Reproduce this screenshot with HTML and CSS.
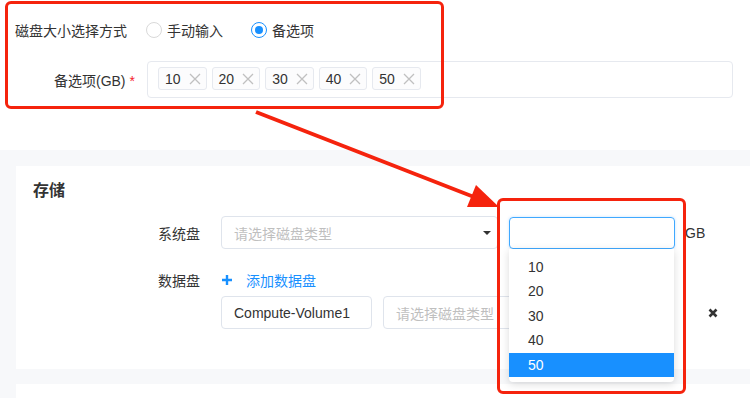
FILE: index.html
```html
<!DOCTYPE html>
<html lang="zh-CN">
<head>
    <meta charset="UTF-8">
    <meta name="viewport" content="width=device-width, initial-scale=1.0">
    <title>磁盘配置</title>
    <link rel="stylesheet" href="styles.css">
</head>
<body>
    <!-- Disk size mode -->
    <section class="size-config">
        <div class="form-row">
            <label class="form-label">磁盘大小选择方式</label>
            <div class="radio-group">
                <label class="radio"><span class="radio-dot"></span>手动输入</label>
                <label class="radio checked"><span class="radio-dot"></span>备选项</label>
            </div>
        </div>
        <div class="form-row options-row">
            <label class="form-label is-required">备选项(GB)<span class="required">*</span></label>
            <div class="tag-box">
                <span class="tag">10<svg class="tag-close" viewBox="0 0 12 12"><path d="M1 1L11 11M11 1L1 11"/></svg></span>
                <span class="tag">20<svg class="tag-close" viewBox="0 0 12 12"><path d="M1 1L11 11M11 1L1 11"/></svg></span>
                <span class="tag">30<svg class="tag-close" viewBox="0 0 12 12"><path d="M1 1L11 11M11 1L1 11"/></svg></span>
                <span class="tag">40<svg class="tag-close" viewBox="0 0 12 12"><path d="M1 1L11 11M11 1L1 11"/></svg></span>
                <span class="tag">50<svg class="tag-close" viewBox="0 0 12 12"><path d="M1 1L11 11M11 1L1 11"/></svg></span>
            </div>
        </div>
    </section>

    <!-- Storage card -->
    <main class="content">
        <section class="card">
            <h2 class="card-title">存储</h2>
            <div class="disk-row">
                <span class="disk-label">系统盘</span>
                <div class="select wide">
                    <span class="placeholder">请选择磁盘类型</span>
                    <span class="caret"></span>
                </div>
                <div class="size-field">
                    <div class="size-input"></div>
                    <ul class="dropdown">
                        <li>10</li>
                        <li>20</li>
                        <li>30</li>
                        <li>40</li>
                        <li class="active">50</li>
                    </ul>
                </div>
                <span class="unit">GB</span>
            </div>
            <div class="disk-row data-row">
                <span class="disk-label">数据盘</span>
                <a class="add-link" href="#">
                    <svg class="plus" viewBox="0 0 10 10"><path d="M5 0V10M0 5H10"/></svg>
                    添加数据盘
                </a>
            </div>
            <div class="volume-row">
                <div class="text-input">Compute-Volume1</div>
                <div class="select volume-select">
                    <span class="placeholder">请选择磁盘类型</span>
                </div>
                <svg class="remove" viewBox="0 0 10 10"><path d="M1.5 1.5L8.5 8.5M8.5 1.5L1.5 8.5"/></svg>
            </div>
        </section>
        <section class="card next-card"></section>
    </main>

    <!-- Annotations -->
    <div class="mark mark-top"></div>
    <div class="mark mark-dropdown"></div>
    <svg class="arrow" viewBox="0 0 750 398">
        <line x1="256" y1="112" x2="474" y2="197"/>
        <polygon points="499,207 467,207 476,185"/>
    </svg>
</body>
</html>
```

FILE: styles.css
```css
* {
    margin: 0;
    padding: 0;
    box-sizing: border-box;
}

body {
    width: 750px;
    height: 398px;
    overflow: hidden;
    position: relative;
    background-color: #fff;
    color: #333;
    font-family: "Liberation Sans", "Noto Sans CJK SC", sans-serif;
    font-size: 14px;
}

/* Disk size mode */
.size-config {
    height: 150px;
    padding-top: 14px;
}

.form-row {
    display: flex;
    align-items: center;
    height: 32px;
}

.form-label {
    width: 146px;
    padding-right: 19px;
    text-align: right;
    flex-shrink: 0;
}

.form-label.is-required {
    padding-right: 11px;
}

.required {
    color: #f5222d;
    margin-left: 4px;
}

.radio-group {
    display: flex;
}

.radio {
    display: flex;
    align-items: center;
    gap: 5px;
    margin-right: 28px;
}

.radio-dot {
    width: 16px;
    height: 16px;
    border: 1px solid #d9d9d9;
    border-radius: 50%;
    display: flex;
    align-items: center;
    justify-content: center;
}

.radio.checked .radio-dot {
    border-color: #1890ff;
}

.radio.checked .radio-dot::after {
    content: "";
    width: 8px;
    height: 8px;
    border-radius: 50%;
    background-color: #1890ff;
}

.options-row {
    height: 37px;
    margin-top: 15px;
}

.tag-box {
    width: 586px;
    height: 37px;
    margin-left: 1px;
    padding: 5px 10px;
    border: 1px solid #e6e9ef;
    border-radius: 4px;
    display: flex;
    gap: 5px;
}

.tag {
    height: 23px;
    padding: 0 5px 0 6px;
    border: 1px solid #e6e9ef;
    border-radius: 3px;
    background-color: #fcfcfd;
    display: flex;
    align-items: center;
    gap: 8px;
}

.tag-close {
    width: 12px;
    height: 12px;
    fill: none;
    stroke: #c0c0c0;
    stroke-width: 1.3;
}

/* Storage card */
.content {
    background-color: #f7f8fa;
    padding: 16px 0 0 16px;
    height: 248px;
}

.card {
    background-color: #fff;
    height: 203px;
    padding: 13px 0 0 17px;
}

.card.next-card {
    margin-top: 15px;
    height: 14px;
    padding: 0;
}

.card-title {
    font-size: 16px;
    font-weight: 600;
    line-height: 24px;
}

.disk-row {
    display: flex;
    align-items: center;
    margin-top: 13px;
}

.disk-label {
    width: 167px;
    margin-right: 21px;
    text-align: right;
}

.select,
.text-input,
.size-input {
    height: 33px;
    border: 1px solid #dfe4ec;
    border-radius: 4px;
    display: flex;
    align-items: center;
    padding: 0 12px;
}

.select.wide {
    width: 277px;
    justify-content: space-between;
    padding-right: 6px;
}

.placeholder {
    color: #bfbfbf;
}

.caret {
    width: 0;
    height: 0;
    border-left: 4px solid transparent;
    border-right: 4px solid transparent;
    border-top: 4px solid #333;
}

.size-field {
    position: relative;
    margin-left: 11px;
}

.size-input {
    width: 166px;
    height: 32px;
    border-color: #40a9ff;
    box-shadow: 0 0 3px rgba(24, 144, 255, 0.25);
}

.dropdown {
    position: absolute;
    top: 32px;
    left: 0;
    width: 165px;
    height: 133px;
    padding-top: 6px;
    list-style: none;
    background-color: #fff;
    border-radius: 0 0 4px 4px;
    box-shadow: 0 2px 8px rgba(0, 0, 0, 0.15);
    z-index: 5;
}

.dropdown li {
    height: 24.5px;
    line-height: 24.5px;
    padding-left: 19px;
}

.dropdown li.active {
    background-color: #1890ff;
    color: #fff;
}

.unit {
    margin-left: 10px;
}

.data-row {
    height: 22px;
    margin-top: 20px;
}

.add-link {
    display: flex;
    align-items: center;
    color: #1890ff;
    text-decoration: none;
    margin-left: 1px;
}

.plus {
    width: 10px;
    height: 10px;
    margin-right: 14px;
    fill: none;
    stroke: #1890ff;
    stroke-width: 2.4;
}

.volume-row {
    display: flex;
    align-items: center;
    margin: 5px 0 0 188px;
}

.text-input {
    width: 151px;
}

.volume-select {
    width: 280px;
    margin-left: 11px;
}

.remove {
    width: 10px;
    height: 10px;
    margin-left: 45px;
    fill: none;
    stroke: #333;
    stroke-width: 2.6;
}

/* Annotations */
.mark {
    position: absolute;
    border: 3px solid #f5230d;
    border-radius: 6px;
    z-index: 10;
}

.mark-top {
    left: 5px;
    top: 1px;
    width: 439px;
    height: 108px;
}

.mark-dropdown {
    left: 497px;
    top: 198px;
    width: 189px;
    height: 196px;
}

.arrow {
    position: absolute;
    left: 0;
    top: 0;
    width: 750px;
    height: 398px;
    z-index: 10;
}

.arrow line {
    stroke: #f5230d;
    stroke-width: 4;
}

.arrow polygon {
    fill: #f5230d;
}
```
